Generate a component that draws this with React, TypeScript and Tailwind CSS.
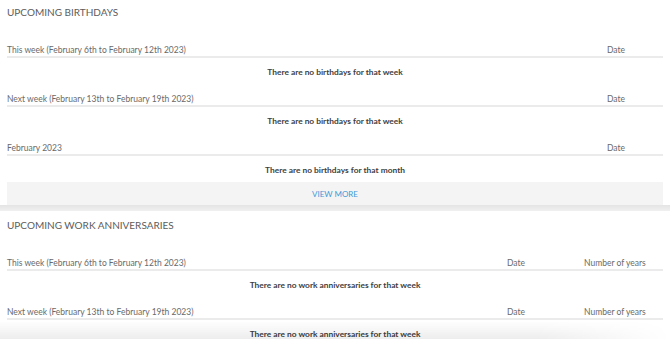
import React from "react";

const font = { fontFamily: "Lato, 'Open Sans', sans-serif" };

function Header({ label, cols }: { label: string; cols: { text: string; w: string }[] }) {
  return (
    <div className="flex items-end border-b-2 border-[#ebebeb] text-[8.5px] leading-[11px] text-[#6a6a6a]">
      <div className="flex-1">{label}</div>
      {cols.map((c) => (
        <div key={c.text} className={c.w}>
          {c.text}
        </div>
      ))}
    </div>
  );
}

function Empty({ text, last }: { text: string; last?: boolean }) {
  return (
    <div className={`text-center text-[8.4px] font-bold leading-[14px] text-[#404040] pt-[7px] ${last ? "pb-[5px]" : "pb-[15px]"}`}>
      {text}
    </div>
  );
}

export default function App() {
  const bCols = [{ text: "Date", w: "w-[56px]" }];
  const aCols = [
    { text: "Date", w: "w-[77px]" },
    { text: "Number of years", w: "w-[79px]" },
  ];
  return (
    <div style={font} className="relative w-[670px] h-[339px] overflow-hidden bg-white">
      <div className="bg-white px-[7px] pt-[5px]">
        <div className="text-[10px] leading-[14px] text-[#5c5c5c] mb-[26px]">UPCOMING BIRTHDAYS</div>
        <Header label="This week (February 6th to February 12th 2023)" cols={bCols} />
        <Empty text="There are no birthdays for that week" />
        <Header label="Next week (February 13th to February 19th 2023)" cols={bCols} />
        <Empty text="There are no birthdays for that week" />
        <Header label="February 2023" cols={bCols} />
        <Empty text="There are no birthdays for that month" last />
        <div className="h-[23px] bg-[#f4f4f4] flex items-center justify-center text-[8px] text-[#3d9ad8]">
          VIEW MORE
        </div>
      </div>
      <div className="h-[6px] bg-gradient-to-b from-[#e4e4e4] to-[#f0f0f0]" />
      <div className="bg-white px-[7px] pt-[7px]">
        <div className="text-[10px] leading-[14px] text-[#5c5c5c] mb-[26px]">UPCOMING WORK ANNIVERSARIES</div>
        <Header label="This week (February 6th to February 12th 2023)" cols={aCols} />
        <Empty text="There are no work anniversaries for that week" />
        <Header label="Next week (February 13th to February 19th 2023)" cols={aCols} />
        <Empty text="There are no work anniversaries for that week" />
      </div>
      <div className="absolute bottom-0 left-0 right-0 h-[18px] bg-[linear-gradient(to_bottom,rgba(0,0,0,0),rgba(0,0,0,0.07))] [mask-image:linear-gradient(to_right,black_80%,transparent)]" />
    </div>
  );
}
